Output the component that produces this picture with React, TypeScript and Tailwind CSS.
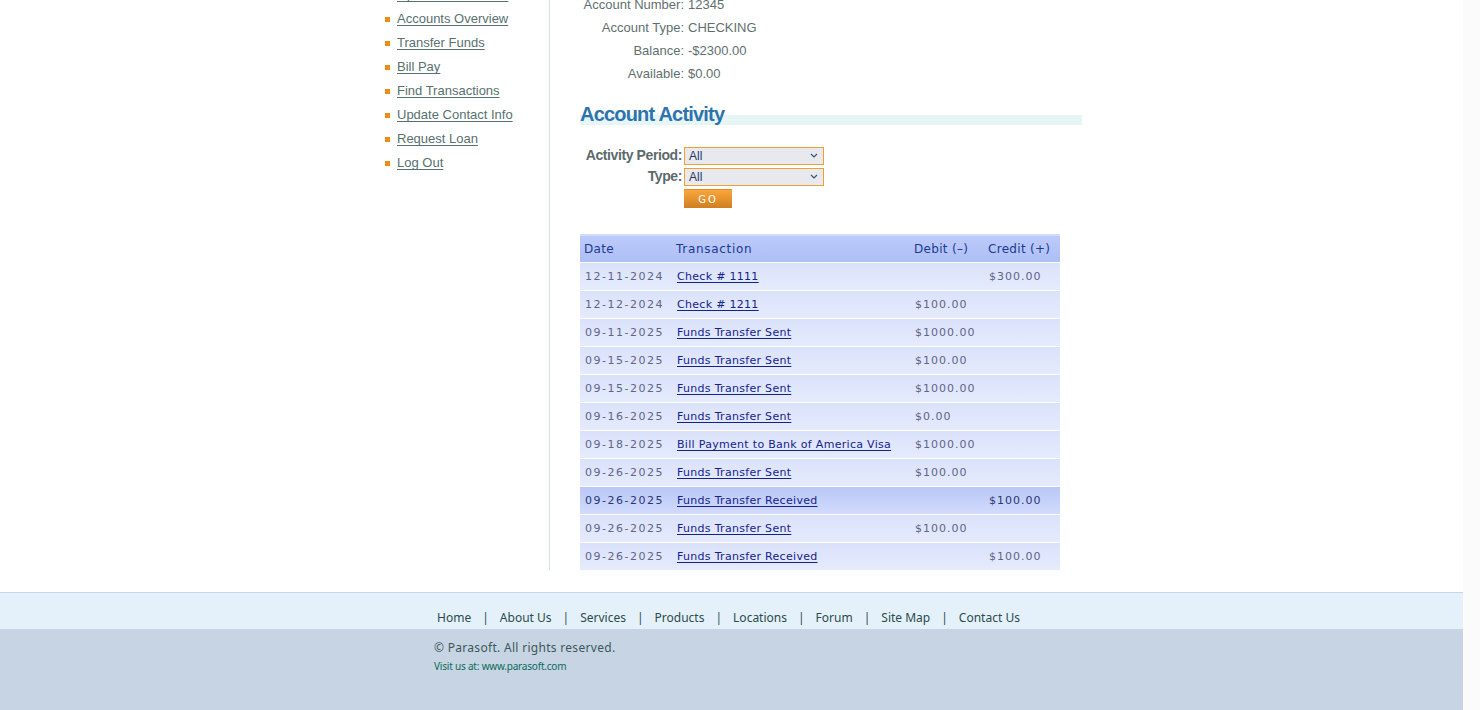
const sideLinks = [
  "Open New Account",
  "Accounts Overview",
  "Transfer Funds",
  "Bill Pay",
  "Find Transactions",
  "Update Contact Info",
  "Request Loan",
  "Log Out",
];

const details = [
  ["Account Number:", "12345"],
  ["Account Type:", "CHECKING"],
  ["Balance:", "-$2300.00"],
  ["Available:", "$0.00"],
];

type Tx = { date: string; desc: string; debit?: string; credit?: string; hot?: boolean };

const txs: Tx[] = [
  { date: "12-11-2024", desc: "Check # 1111", credit: "$300.00" },
  { date: "12-12-2024", desc: "Check # 1211", debit: "$100.00" },
  { date: "09-11-2025", desc: "Funds Transfer Sent", debit: "$1000.00" },
  { date: "09-15-2025", desc: "Funds Transfer Sent", debit: "$100.00" },
  { date: "09-15-2025", desc: "Funds Transfer Sent", debit: "$1000.00" },
  { date: "09-16-2025", desc: "Funds Transfer Sent", debit: "$0.00" },
  { date: "09-18-2025", desc: "Bill Payment to Bank of America Visa", debit: "$1000.00" },
  { date: "09-26-2025", desc: "Funds Transfer Sent", debit: "$100.00" },
  { date: "09-26-2025", desc: "Funds Transfer Received", credit: "$100.00", hot: true },
  { date: "09-26-2025", desc: "Funds Transfer Sent", debit: "$100.00" },
  { date: "09-26-2025", desc: "Funds Transfer Received", credit: "$100.00" },
];

const footerLinks = ["Home", "About Us", "Services", "Products", "Locations", "Forum", "Site Map", "Contact Us"];

function FakeSelect() {
  return (
    <div className="ml-[2px] flex h-[18px] w-[140px] items-center justify-between border border-[#f0a030] bg-[#e8e8ef] pl-[4px] pr-[5px] text-[12px] font-normal tracking-normal text-[#1f3a5f]">
      <span>All</span>
      <svg width="8" height="5" viewBox="0 0 8 5" fill="none">
        <path d="M1 1l3 3 3-3" stroke="#3b5372" strokeWidth="1.2" />
      </svg>
    </div>
  );
}

function Sidebar() {
  return (
    <ul className="w-[168px] pl-[4px]">
      {sideLinks.map((l) => (
        <li key={l} className="flex h-[24px] items-center gap-[7px]">
          <span className="h-[5px] w-[5px] bg-[#ec8c10]" />
          <a href="#" className="text-[#587070] underline underline-offset-2">
            {l}
          </a>
        </li>
      ))}
    </ul>
  );
}

function TxTable() {
  return (
    <div className="mt-[26px] w-[480px] font-['DejaVu_Sans',sans-serif]">
      <div className="grid h-[28px] grid-cols-[92px_238px_74px_76px] items-center border-t-2 border-[#d3dcfb] bg-[linear-gradient(to_bottom,#bccaf9,#aebff8)] text-[12px] tracking-[0.3px] text-[#1c3a8e]">
        <span className="pl-[4px]">Date</span>
        <span className="pl-[4px] tracking-[0.7px]">Transaction</span>
        <span className="pl-[4px]">Debit (–)</span>
        <span className="pl-[4px]">Credit (+)</span>
      </div>
      {txs.map((t, i) => (
        <div
          key={i}
          className={
            "grid h-[28px] grid-cols-[92px_238px_74px_76px] items-center border-t border-white pt-[2px] text-[11px] " +
            (t.hot
              ? "bg-[linear-gradient(to_bottom,#b9c7f8,#d2dbfb)] text-[#2a3676]"
              : "bg-[linear-gradient(to_bottom,#dae2fb,#e6ebfd)] text-[#5f6588]")
          }
        >
          <span className="pl-[5px] tracking-[1.5px]">{t.date}</span>
          <span className="pl-[5px]">
            <a href="#" className="tracking-[0.3px] text-[#14248c] underline underline-offset-2">
              {t.desc}
            </a>
          </span>
          <span className="pl-[5px] tracking-[1px]">{t.debit}</span>
          <span className="pl-[5px] tracking-[1px]">{t.credit}</span>
        </div>
      ))}
    </div>
  );
}

function Footer() {
  return (
    <footer className="mt-[22px] flex flex-1 flex-col border-t border-[#c9d6e6] font-['Noto_Sans',sans-serif]">
      <div className="h-[36px] bg-[#e4f1fb] pt-[16px]">
        <div className="flex justify-center gap-[11px] whitespace-nowrap pr-[6px] text-[12px] leading-[18px] text-[#2b4b4b]">
          {footerLinks.map((f, i) => (
            <span key={f} className="flex gap-[11px]">
              {i > 0 && <span>|</span>}
              <a href="#">{f}</a>
            </span>
          ))}
        </div>
      </div>
      <div className="flex-1 bg-[#c6d4e4]">
        <div className="mx-auto w-[601px] pl-[3px] pt-[10px]">
          <p className="whitespace-nowrap text-[12px] leading-[18px] tracking-[0.3px] text-[#3d5858]">
            © Parasoft. All rights reserved.
          </p>
          <p className="whitespace-nowrap text-[10px] leading-[18px] tracking-[-0.2px] text-[#0b6b58]">
            Visit us at: <a href="#">www.parasoft.com</a>
          </p>
        </div>
      </div>
    </footer>
  );
}

export default function App() {
  return (
    <div className="flex h-[710px] w-[1480px] overflow-hidden bg-white">
      <div className="flex h-full w-[1463px] flex-col overflow-hidden">
        <div className="mx-auto -mt-[17px] flex w-[701px] font-['Liberation_Sans',Arial,sans-serif] text-[13px]">
          <Sidebar />
          <main className="flex-1 border-l border-[#d2e6e2] pl-[30px] pt-[10px]">
            <div className="grid grid-cols-[104px_auto] gap-x-[4px] leading-[23px] text-[#5f6f6f]">
              {details.map(([k, v]) => (
                <div key={k} className="contents">
                  <span className="text-right">{k}</span>
                  <span>{v}</span>
                </div>
              ))}
            </div>

            <h2 className="mt-[18px] h-[22px] w-[502px] bg-[linear-gradient(to_bottom,transparent_12px,#e6f6f7_12px)] text-[20px] font-bold leading-[22px] tracking-[-0.8px] text-[#2d73ad]">
              Account Activity
            </h2>

            <div className="mt-[20px] font-bold text-[#5b6b6b]">
              <div className="flex h-[21px] items-center">
                <span className="w-[102px] text-right text-[14px] tracking-[-0.4px]">Activity Period:</span>
                <FakeSelect />
              </div>
              <div className="flex h-[21px] items-center">
                <span className="w-[102px] text-right text-[14px] tracking-[-0.4px]">Type:</span>
                <FakeSelect />
              </div>
              <button className="ml-[104px] mt-[2px] block h-[19px] w-[48px] border-t border-[#e08a28] bg-[linear-gradient(to_bottom,#fba63b,#cf7f22)] font-['DejaVu_Sans',sans-serif] text-[10px] font-normal tracking-[2px] text-white">
                GO
              </button>
            </div>

            <TxTable />
          </main>
        </div>
        <Footer />
      </div>
      <div className="w-[17px] bg-[#fbfbfb]" />
    </div>
  );
}
